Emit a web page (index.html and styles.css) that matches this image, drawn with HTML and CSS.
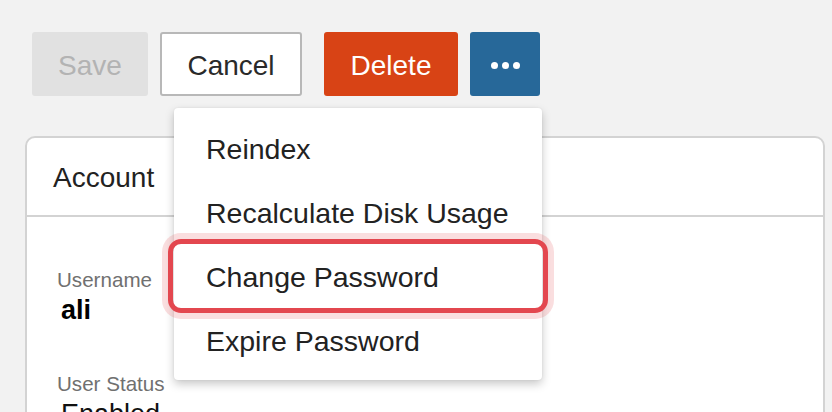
FILE: index.html
```html
<!DOCTYPE html>
<html lang="en">
<head>
<meta charset="utf-8">
<title>User</title>
<link rel="stylesheet" href="styles.css">
</head>
<body>
<div class="page">
  <div class="toolbar">
    <button class="btn btn-save" disabled>Save</button>
    <button class="btn btn-cancel">Cancel</button>
    <button class="btn btn-delete">Delete</button>
    <div class="more-wrap">
      <button class="btn btn-more" aria-label="More actions">
        <span class="dot"></span><span class="dot"></span><span class="dot"></span>
      </button>
      <ul class="menu">
        <li class="menu-item">Reindex</li>
        <li class="menu-item">Recalculate Disk Usage</li>
        <li class="menu-item menu-item-highlight">Change Password</li>
        <li class="menu-item">Expire Password</li>
      </ul>
    </div>
  </div>
  <section class="card">
    <header class="card-header">Account</header>
    <div class="card-body">
      <div class="field">
        <div class="field-label">Username</div>
        <div class="field-value field-value-strong">ali</div>
      </div>
      <div class="field">
        <div class="field-label">User Status</div>
        <div class="field-value">Enabled</div>
      </div>
    </div>
  </section>
</div>
</body>
</html>
```

FILE: styles.css
```css
* { box-sizing: border-box; }
html, body {
  margin: 0;
  padding: 0;
  background: #f2f2f2;
  font-family: "Liberation Sans", Arial, sans-serif;
  color: #222;
  overflow: hidden;
  height: 412px;
}
.page {
  padding: 32px 0 0 0;
}
.toolbar {
  display: flex;
  align-items: center;
  padding-left: 32px;
  height: 64px;
}
.btn {
  font-family: inherit;
  font-size: 28px;
  height: 64px;
  border-radius: 3px;
  border: 0;
  padding: 3px 0 0 0;
  margin: 0;
  display: flex;
  align-items: center;
  justify-content: center;
  cursor: pointer;
}
.btn-save {
  width: 116px;
  background: #e1e1e1;
  color: #b3b3b3;
}
.btn-cancel {
  width: 142px;
  margin-left: 12px;
  background: #fff;
  color: #2a2a2a;
  border: 2px solid #b8b8b8;
}
.btn-delete {
  width: 134px;
  margin-left: 22px;
  background: #d84315;
  color: #fff;
}
.more-wrap {
  position: relative;
  margin-left: 12px;
}
.btn-more {
  width: 70px;
  background: #276899;
  gap: 4px;
  padding-top: 2px;
}
.dot {
  width: 7px;
  height: 7px;
  border-radius: 50%;
  background: #fff;
  display: block;
}
.menu {
  position: absolute;
  right: -2px;
  top: 76px;
  width: 368px;
  margin: 0;
  padding: 8px 0;
  list-style: none;
  background: #fff;
  border-radius: 4px;
  box-shadow: 0 4px 10px rgba(0, 0, 0, 0.22), 0 0 2px rgba(0, 0, 0, 0.08);
  z-index: 10;
}
.menu-item {
  position: relative;
  height: 64px;
  line-height: 66px;
  padding-left: 32px;
  font-size: 28.5px;
  color: #222;
  white-space: nowrap;
}
.menu-item-highlight::after {
  content: "";
  position: absolute;
  top: -5px;
  bottom: -5px;
  left: -6px;
  right: -6px;
  border: 5px solid #e3474f;
  border-radius: 13px;
  box-shadow: 0 0 0 6px rgba(227, 71, 79, 0.18);
}
.card {
  margin: 40px 0 0 25px;
  width: 800px;
  background: #fff;
  border: 2px solid #d3d3d3;
  border-radius: 10px;
}
.card-header {
  height: 79px;
  display: flex;
  align-items: center;
  padding-left: 26px;
  padding-top: 3px;
  font-size: 28px;
  color: #222;
  border-bottom: 2px solid #d3d3d3;
}
.card-body {
  padding: 51px 0 0 30px;
}
.field {
  margin-bottom: 44px;
}
.field-label {
  font-size: 20.6px;
  line-height: 24px;
  color: #707070;
}
.field-value {
  font-size: 27px;
  line-height: 36px;
  padding-left: 4px;
  color: #111;
}
.field-value-strong {
  font-weight: bold;
  color: #000;
}
```
